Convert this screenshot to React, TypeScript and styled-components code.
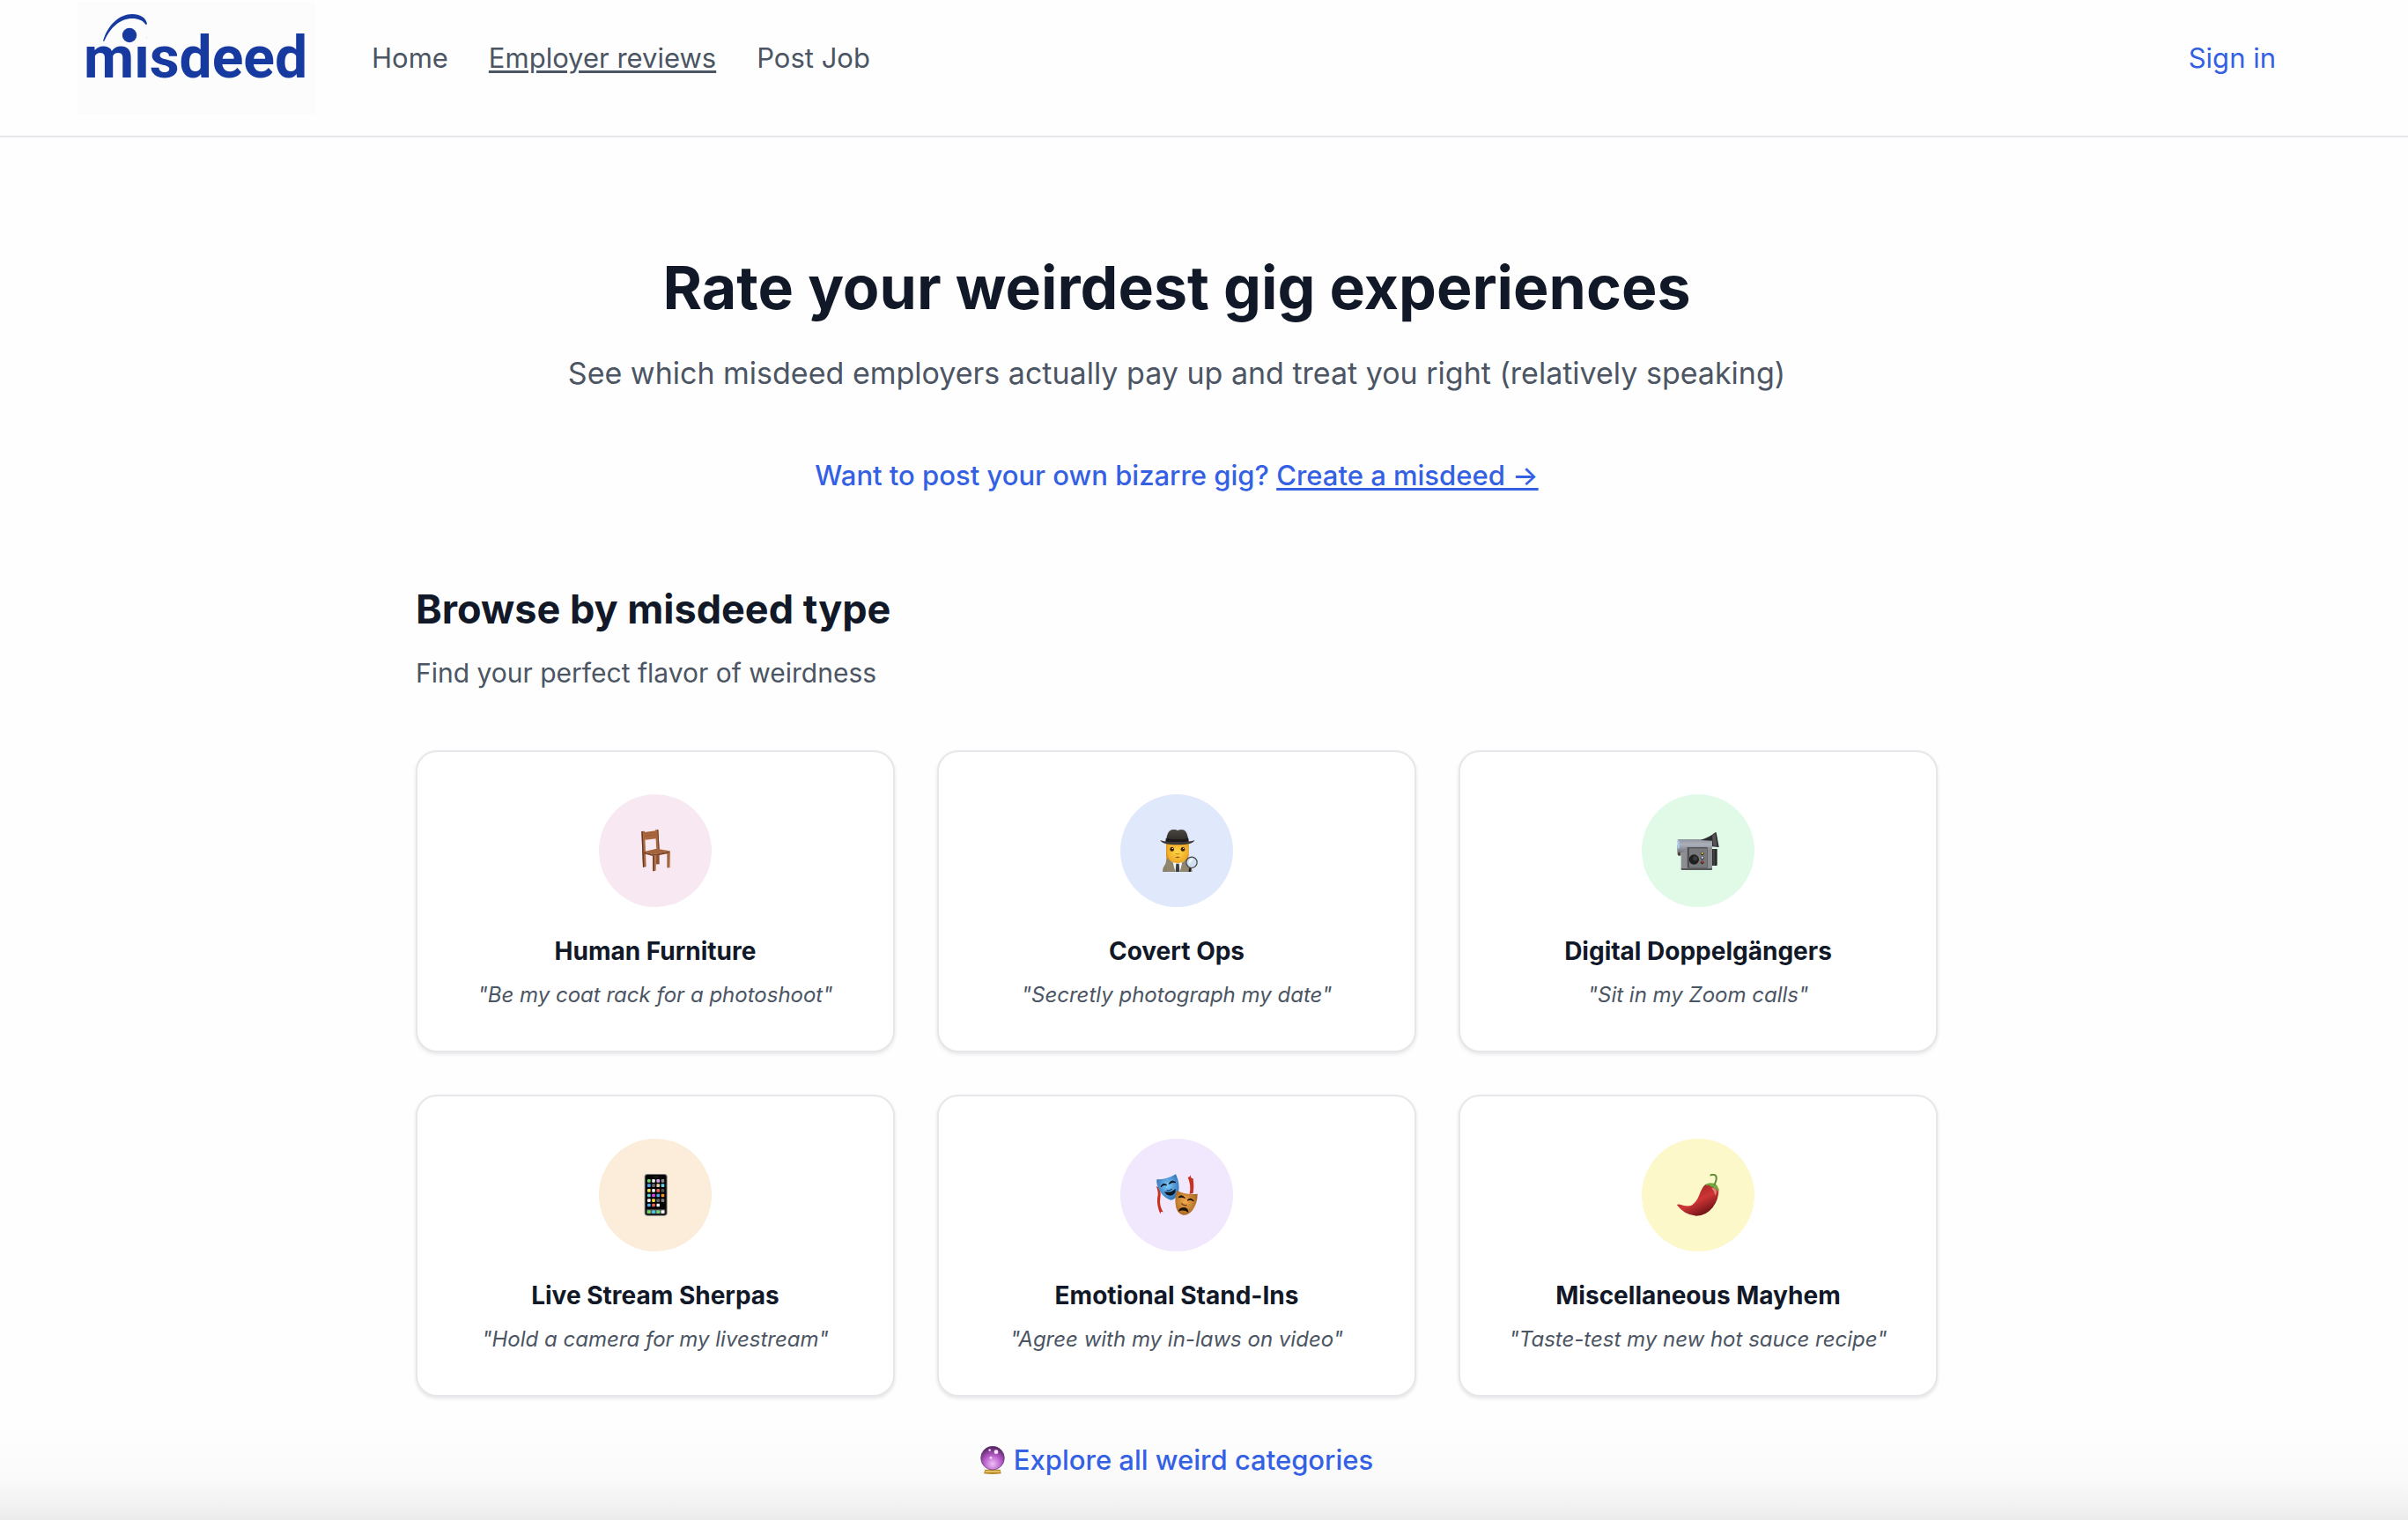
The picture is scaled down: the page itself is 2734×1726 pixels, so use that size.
import React from 'react';
import styled, { createGlobalStyle } from 'styled-components';

const color = {
  ink: '#111827',
  muted: '#4b5563',
  link: '#3461e4',
  line: '#e5e7eb',
  brand: '#163a9f',
};

const GlobalStyle = createGlobalStyle`
  *, *::before, *::after { box-sizing: border-box; }
  body {
    margin: 0;
    background: #fefefe;
    color: ${color.ink};
    font-family: Inter, 'Liberation Sans', sans-serif;
    font-size: 31px;
    line-height: 48px;
    -webkit-font-smoothing: antialiased;
  }
  h1, h2, h3, p, ul { margin: 0; padding: 0; }
  a { color: inherit; text-decoration: none; }
`;

const Page = styled.div`
  min-height: 100vh;
  background: linear-gradient(to top, #ebebeb 0, #f3f3f3 20px, #f9f9f9 44px, #fcfcfc 72px, #fefefe 110px);
`;

const Header = styled.header`
  display: flex;
  align-items: center;
  justify-content: space-between;
  padding: 2px 150px 24px 88px;
  border-bottom: 2px solid ${color.line};
`;

const HeaderStart = styled.div`
  display: flex;
  align-items: center;
  gap: 64px;
`;

const LogoLink = styled.a`
  display: block;
  width: 270px;
  height: 128px;
  background: #fcfcfc;
`;

const NavList = styled.ul`
  display: flex;
  gap: 46px;
  list-style: none;
  color: ${color.muted};
`;

const NavLink = styled.a<{ $active?: boolean }>`
  text-decoration: ${(p) => (p.$active ? 'underline' : 'none')};
  text-decoration-thickness: 3px;
  text-underline-offset: 3px;
`;

const SignIn = styled.a`
  color: ${color.link};
`;

const Main = styled.main`
  padding: 130px 62px 44px 0;
`;

const Column = styled.div`
  width: 100%;
  max-width: 1728px;
  margin: 0 auto;
`;

const Hero = styled.section`
  text-align: center;
`;

const Title = styled.h1`
  font-size: 68px;
  line-height: 80px;
  font-weight: 700;
`;

const Lead = styled.p`
  margin-top: 30px;
  color: ${color.muted};
  font-size: 34px;
  line-height: 56px;
`;

const Prompt = styled.p`
  margin-top: 64px;
  color: ${color.link};
  font-weight: 500;
`;

const PromptLink = styled.a`
  text-decoration: underline;
  text-decoration-thickness: 3px;
  text-underline-offset: 3px;
`;

const Browse = styled.section`
  margin-top: 96px;
`;

const SectionTitle = styled.h2`
  font-size: 45px;
  line-height: 64px;
  font-weight: 700;
`;

const SectionText = styled.p`
  margin-top: 16px;
  color: ${color.muted};
  font-size: 30px;
`;

const Grid = styled.div`
  display: grid;
  grid-template-columns: repeat(3, minmax(0, 1fr));
  gap: 48px;
  margin-top: 64px;
`;

const Card = styled.a`
  display: flex;
  flex-direction: column;
  align-items: center;
  padding: 48px 24px;
  border: 2px solid ${color.line};
  border-radius: 24px;
  background: #fff;
  box-shadow: 0 2px 4px rgba(0, 0, 0, 0.1);
  text-align: center;
`;

const Disc = styled.span<{ $tint: string }>`
  display: grid;
  place-items: center;
  width: 128px;
  height: 128px;
  border-radius: 50%;
  background: ${(p) => p.$tint};

  svg {
    width: 48px;
    height: 48px;
  }
`;

const CardTitle = styled.h3`
  margin-top: 32px;
  font-size: 28px;
  line-height: 36px;
  font-weight: 700;
`;

const CardQuote = styled.p`
  margin-top: 16px;
  color: ${color.muted};
  font-size: 24px;
  line-height: 31px;
  font-style: italic;
`;

const Explore = styled.div`
  display: flex;
  justify-content: center;
  margin-top: 48px;
`;

const ExploreLink = styled.a`
  display: inline-flex;
  align-items: center;
  gap: 10px;
  color: ${color.link};
  font-weight: 500;

  svg {
    width: 28px;
    height: 32px;
  }
`;

const LogoWord = styled.text`
  font-family: Roboto, 'Liberation Sans', sans-serif;
  font-size: 66px;
  font-weight: 700;
  fill: ${color.brand};
`;

const Logo = () => (
  <svg width="270" height="128" viewBox="0 0 270 128" role="img" aria-label="misdeed">
    <LogoWord x="7" y="86">misdeed</LogoWord>
    <rect x="61" y="30" width="17" height="18" fill="#fcfcfc" />
    <circle cx="59" cy="38" r="8.2" fill={color.brand} />
    <path
      d="M29 45 C34 26 48 14 62 14 C71 14 78 18 79 25.500 L77.500 26 C74 21 69 19 62 19 C49 19 37 29 30.500 44.500 Z"
      fill={color.brand}
    />
  </svg>
);

const ChairIcon = () => (
  <svg viewBox="0 0 144 144" aria-hidden="true">
    <path d="M75 86H86V118H75Z" fill="#8c5133" />
    <path d="M72 1L82 0L86 70H76Z" fill="#a8683f" />
    <path d="M79 0L82 0L86 70H83Z" fill="#6f3d25" />
    <path d="M34 9L74 4L76 31L37 35Z" fill="#a9663f" />
    <path d="M36 14L74 9M37 22L75 17" stroke="#94552f" strokeWidth="1.500" />
    <path d="M25 6L36 5L41 127L30 128Z" fill="#a9673f" />
    <path d="M25 6L29 6L34 128H30Z" fill="#633722" />
    <path d="M32 76L76 65L122 73L66 85Z" fill="#a5633c" />
    <path d="M32 76L66 85L122 73V80L66 91L32 82Z" fill="#804628" />
    <path d="M63 89L76 87L74 140L64 142Z" fill="#b9764b" />
    <path d="M63 89L68 89L69 141L64 142Z" fill="#6f3d25" />
    <path d="M113 80L123 78L122 130H113Z" fill="#b9764b" />
    <path d="M113 80L116 80V130H113Z" fill="#7a452a" />
  </svg>
);

const DetectiveIcon = () => (
  <svg viewBox="0 0 144 144" aria-hidden="true">
    <defs>
      <linearGradient id="hat" x1="0" y1="0" x2="0" y2="1">
        <stop offset="0" stopColor="#4c4742" />
        <stop offset="1" stopColor="#2b2826" />
      </linearGradient>
      <radialGradient id="skin" cx="0.5" cy="0.45" r="0.6">
        <stop offset="0" stopColor="#ffd648" />
        <stop offset="1" stopColor="#eba21f" />
      </radialGradient>
    </defs>
    <path d="M36 46H113V88Q112 100 106 106H42Q36 100 36 88Z" fill="#d98a1c" />
    <path d="M24 144Q24 116 50 108L75 116L100 108Q124 116 125 144Z" fill="#8b8168" />
    <path d="M58 106H92L84 144H66Z" fill="#f3f3f2" />
    <path d="M70 116H80L82 144H68Z" fill="#3a3d44" />
    <path d="M38 96L54 108L68 144H42L34 116Z" fill="#8f866d" />
    <path d="M108 100L96 108L82 144H108Z" fill="#8f866d" />
    <path d="M38 46H112V74Q110 112 75 114Q40 112 38 74Z" fill="url(#skin)" />
    <ellipse cx="56" cy="67" rx="7" ry="7.500" fill="#3a2411" />
    <ellipse cx="93" cy="67" rx="7" ry="7.500" fill="#3a2411" />
    <circle cx="58" cy="64" r="2" fill="#fff" />
    <circle cx="95" cy="64" r="2" fill="#fff" />
    <path d="M68 82Q75 86 81 82" stroke="#c67f18" strokeWidth="3" fill="none" />
    <path d="M66 94Q75 91 84 94Q75 99 66 94Z" fill="#8c3d1c" />
    <path d="M36 40Q38 6 54 1Q66 -2 75 3Q88 -2 98 2Q110 10 112 40Z" fill="url(#hat)" />
    <path d="M35 30Q75 38 112 30L113 44Q75 50 34 44Z" fill="#1c1a1a" />
    <path d="M16 36Q30 42 75 42Q120 42 133 36Q128 52 75 52Q22 52 16 36Z" fill="#3c3835" />
    <path d="M118 130L116 144" stroke="#222" strokeWidth="7" />
    <circle cx="123" cy="112" r="18.500" fill="#cfe0ee" stroke="#3f4348" strokeWidth="3.500" />
    <path d="M113 108Q118 98 128 99L116 118Z" fill="#f4f9fd" />
  </svg>
);

const CamcorderIcon = () => (
  <svg viewBox="0 0 144 144" aria-hidden="true">
    <defs>
      <linearGradient id="barrel" x1="0" y1="0" x2="0" y2="1">
        <stop offset="0" stopColor="#8f949e" />
        <stop offset="0.4" stopColor="#abb0bb" />
        <stop offset="1" stopColor="#74767c" />
      </linearGradient>
    </defs>
    <path d="M120 66H137V120Q137 123 134 123H120Z" fill="#2b2b2d" />
    <path d="M124 66H128V123H124Z" fill="#4a4a4d" />
    <path d="M14 56H120V134Q120 138 116 138H18Q14 138 14 134Z" fill="#8d8e91" />
    <path d="M14 132H120V134Q120 138 116 138H18Q14 138 14 134Z" fill="#56575a" />
    <path d="M2 54H13V89H6Q2 88 2 84Z" fill="#4d4340" />
    <path d="M6 33H120V62H30Q26 78 13 78H2V37Q2 33 6 33Z" fill="url(#barrel)" />
    <path d="M2 38H8V64H2Z" fill="#a9cdf0" />
    <path d="M35 60H104V131H35Z" fill="#505154" />
    <path d="M42 64H102V129H42Z" fill="#77787b" />
    <circle cx="58" cy="102" r="17" fill="#1f1f21" />
    <circle cx="62" cy="98" r="8" fill="#3d3d40" />
    <circle cx="86" cy="82" r="5.500" fill="#222" />
    <circle cx="86" cy="97" r="5.500" fill="#222" />
    <circle cx="86" cy="112" r="5.500" fill="#222" />
    <circle cx="86" cy="81" r="3.500" fill="#d6c640" />
    <circle cx="86" cy="96" r="3.500" fill="#e6e6e6" />
    <circle cx="86" cy="111" r="3.500" fill="#d0392d" />
    <path d="M80 36Q112 26 130 10L134 10L143 60L120 58V38Z" fill="#2c2c2e" />
    <path d="M120 22L130 12L137 56L124 56Z" fill="#555558" />
  </svg>
);

const phoneRows: [number, string[]][] = [
  [23, ['#6bdc6b', '#efeff2', '#d9a3ee', '#8b8b90']],
  [39, ['#4aa6f5', '#6d6d72', '#e3cfa4', '#62d3ee']],
  [56, ['#f3e04e', '#f2f2f4', '#ee6350', '#55555a']],
  [73, ['#62d8e6', '#d94be2', '#4aa6f5', '#f2912a']],
  [90, ['#f2f2f4', '#f2dd3e', '#66666b', '#7c7c81']],
  [106, ['#4ab4f5', '#ee6350', '#f2f2f4']],
  [129, ['#6bdc5b', '#4fc3f3', '#6bdc6b', '#fafafa']],
];

const PhoneIcon = () => (
  <svg viewBox="0 0 144 144" aria-hidden="true">
    <rect x="35" y="0" width="78" height="143" rx="10" fill="#7c7d80" />
    <rect x="38" y="3" width="72" height="137" rx="8" fill="#050505" />
    <rect x="65" y="8" width="18" height="4" rx="2" fill="#242426" />
    <rect x="42" y="121" width="64" height="15" rx="2" fill="#58595c" />
    {phoneRows.map(([y, apps]) =>
      apps.map((fill, i) => (
        <rect key={`${y}-${i}`} x={45 + i * 15.6} y={y - 5} width="11" height="11" rx="3" fill={fill} />
      )),
    )}
  </svg>
);

const MasksIcon = () => (
  <svg viewBox="0 0 144 144" aria-hidden="true">
    <defs>
      <radialGradient id="comedy" cx="0.5" cy="0.45" r="0.6">
        <stop offset="0" stopColor="#7cc7f8" />
        <stop offset="1" stopColor="#2d6fb4" />
      </radialGradient>
      <radialGradient id="tragedy" cx="0.45" cy="0.45" r="0.6">
        <stop offset="0" stopColor="#f2ab50" />
        <stop offset="1" stopColor="#a5621d" />
      </radialGradient>
    </defs>
    <path d="M2 42L10 46Q20 62 16 82Q12 108 26 130L19 129L16 136Q4 108 6 84Q12 62 2 42Z" fill="#c93120" />
    <path d="M110 12L116 10L118 4L122 14L128 16Q132 42 128 66L116 68Q122 38 110 12Z" fill="#c93120" />
    <path d="M4 19Q40 19 69 1Q84 34 78 62Q70 88 52 89Q28 82 13 56Q2 38 4 19Z" fill="url(#comedy)" />
    <path d="M18 44Q24 28 38 38Q27 35 18 44ZM46 34Q52 18 69 29Q56 26 46 34Z" fill="#0d1726" stroke="#0d1726" strokeWidth="3" />
    <path d="M30 60Q52 66 68 50Q70 72 50 74Q36 74 30 60Z" fill="#0d1726" />
    <path d="M38 55Q46 60 56 51" stroke="#1c4a7c" strokeWidth="4" fill="none" />
    <path d="M73 57Q105 73 143 68Q143 100 125 125Q110 142 93 140Q71 134 68 104Q65 75 73 57Z" fill="url(#tragedy)" />
    <path d="M78 80Q88 68 100 82Q89 76 78 80ZM108 90Q120 78 130 92Q119 85 108 90Z" fill="#1b1008" stroke="#1b1008" strokeWidth="3" />
    <path d="M78 128Q80 114 97 114Q112 116 112 132Q96 120 78 128Z" fill="#1b1008" />
    <path d="M88 100Q96 110 107 106" stroke="#7a4311" strokeWidth="4" fill="none" />
  </svg>
);

const ChiliIcon = () => (
  <svg viewBox="0 0 144 144" aria-hidden="true">
    <defs>
      <linearGradient id="pepper" x1="0.3" y1="0.2" x2="0.75" y2="0.9">
        <stop offset="0" stopColor="#a32528" />
        <stop offset="0.45" stopColor="#cf3536" />
        <stop offset="1" stopColor="#6d1216" />
      </linearGradient>
    </defs>
    <path
      d="M0 106Q2 102 10 104Q32 112 48 108Q66 98 76 72Q86 44 97 36Q122 30 142 50Q144 84 122 114Q100 142 66 143Q24 140 0 106Z"
      fill="url(#pepper)"
    />
    <path d="M118 48Q130 44 134 58Q136 68 130 74Q128 58 118 48Z" fill="#ee9a94" opacity="0.8" />
    <path d="M97 36Q108 28 126 32Q140 36 143 58Q136 60 133 50Q126 52 122 44Q114 46 110 38Q102 42 97 36Z" fill="#74a83f" />
    <path d="M128 36Q138 16 132 6Q126 0 115 4" stroke="#5c8c35" strokeWidth="6" strokeLinecap="round" fill="none" />
  </svg>
);

const CrystalBallIcon = () => (
  <svg viewBox="0 0 84 96" aria-hidden="true">
    <defs>
      <radialGradient id="orb" cx="0.5" cy="0.75" r="0.75">
        <stop offset="0" stopColor="#ecc0f5" />
        <stop offset="0.5" stopColor="#b75bc9" />
        <stop offset="1" stopColor="#4c1f58" />
      </radialGradient>
    </defs>
    <path d="M16 80H68L71 94Q42 98 12 94Z" fill="#b98a2c" />
    <path d="M18 84H66L68 89H15Z" fill="#e9c562" />
    <circle cx="42" cy="41" r="40" fill="url(#orb)" stroke="#5c3a70" strokeWidth="2" />
    <circle cx="54" cy="20" r="7" fill="#fbe6ff" />
    <circle cx="32" cy="14" r="4" fill="#f0c6f7" />
    <circle cx="36" cy="40" r="4" fill="#f8dcff" />
  </svg>
);

const categories = [
  { title: 'Human Furniture', quote: 'Be my coat rack for a photoshoot', tint: '#f7e8f1', Icon: ChairIcon },
  { title: 'Covert Ops', quote: 'Secretly photograph my date', tint: '#dfe9fb', Icon: DetectiveIcon },
  { title: 'Digital Doppelgängers', quote: 'Sit in my Zoom calls', tint: '#e1fae8', Icon: CamcorderIcon },
  { title: 'Live Stream Sherpas', quote: 'Hold a camera for my livestream', tint: '#fcedda', Icon: PhoneIcon },
  { title: 'Emotional Stand-Ins', quote: 'Agree with my in-laws on video', tint: '#f1e8fd', Icon: MasksIcon },
  { title: 'Miscellaneous Mayhem', quote: 'Taste-test my new hot sauce recipe', tint: '#fdf8c9', Icon: ChiliIcon },
];

export default function App() {
  return (
    <Page>
      <GlobalStyle />
      <Header>
        <HeaderStart>
          <LogoLink href="#">
            <Logo />
          </LogoLink>
          <nav aria-label="Main">
            <NavList>
              <li><NavLink href="#home">Home</NavLink></li>
              <li><NavLink href="#reviews" $active aria-current="page">Employer reviews</NavLink></li>
              <li><NavLink href="#post">Post Job</NavLink></li>
            </NavList>
          </nav>
        </HeaderStart>
        <SignIn href="#signin">Sign in</SignIn>
      </Header>
      <Main>
        <Column>
          <Hero>
            <Title>Rate your weirdest gig experiences</Title>
            <Lead>See which misdeed employers actually pay up and treat you right (relatively speaking)</Lead>
            <Prompt>
              Want to post your own bizarre gig? <PromptLink href="#create">Create a misdeed →</PromptLink>
            </Prompt>
          </Hero>
          <Browse>
            <SectionTitle>Browse by misdeed type</SectionTitle>
            <SectionText>Find your perfect flavor of weirdness</SectionText>
            <Grid>
              {categories.map(({ title, quote, tint, Icon }) => (
                <Card key={title} href="#category">
                  <Disc $tint={tint}><Icon /></Disc>
                  <CardTitle>{title}</CardTitle>
                  <CardQuote>"{quote}"</CardQuote>
                </Card>
              ))}
            </Grid>
            <Explore>
              <ExploreLink href="#all">
                <CrystalBallIcon />
                Explore all weird categories
              </ExploreLink>
            </Explore>
          </Browse>
        </Column>
      </Main>
    </Page>
  );
}
